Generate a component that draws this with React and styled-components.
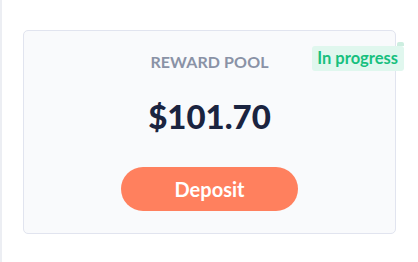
import React from 'react';
import styled, { createGlobalStyle } from 'styled-components';

const GlobalStyle = createGlobalStyle`
  html, body {
    margin: 0;
    padding: 0;
    background: #ffffff;
    font-family: Lato, "Noto Sans", sans-serif;
  }
`;

const Page = styled.div`
  width: 418px;
  height: 262px;
  box-sizing: border-box;
  border-left: 2px solid #eceef3;
  padding: 30px 0 0 21px;
  overflow: hidden;
`;

const Card = styled.section`
  position: relative;
  width: 373px;
  height: 204px;
  box-sizing: border-box;
  border: 1px solid #e1e4ef;
  border-radius: 5px;
  background: #f9fafc;
  display: flex;
  flex-direction: column;
  align-items: center;
  padding-top: 21px;
`;

const Label = styled.div`
  font-size: 16px;
  font-weight: 700;
  color: #8a92a6;
  letter-spacing: 0.1px;
  line-height: 20px;
`;

const Amount = styled.div`
  margin-top: 24px;
  font-size: 33px;
  font-weight: 900;
  color: #1b2440;
  line-height: 40px;
`;

const Button = styled.button`
  margin-top: 31px;
  width: 177px;
  height: 44px;
  border: none;
  border-radius: 22px;
  background: #ff805e;
  color: #ffffff;
  font-family: Lato, "Noto Sans", sans-serif;
  font-size: 20px;
  font-weight: 700;
  cursor: pointer;
`;

const Badge = styled.span`
  position: absolute;
  top: 15px;
  right: -9px;
  padding: 2px 6px 3px 5px;
  border-radius: 3px;
  background: #e0f7ee;
  color: #17c07e;
  font-size: 16.5px;
  font-weight: 700;
  line-height: 20px;

  &::before {
    content: '';
    position: absolute;
    right: 0;
    top: -4px;
    width: 7px;
    height: 4px;
    background: #cdeee0;
    border-radius: 2px 2px 0 0;
  }
`;

export default function App() {
  return (
    <>
      <GlobalStyle />
      <Page>
        <Card>
          <Badge>In progress</Badge>
          <Label>REWARD POOL</Label>
          <Amount>$101.70</Amount>
          <Button type="button">Deposit</Button>
        </Card>
      </Page>
    </>
  );
}
